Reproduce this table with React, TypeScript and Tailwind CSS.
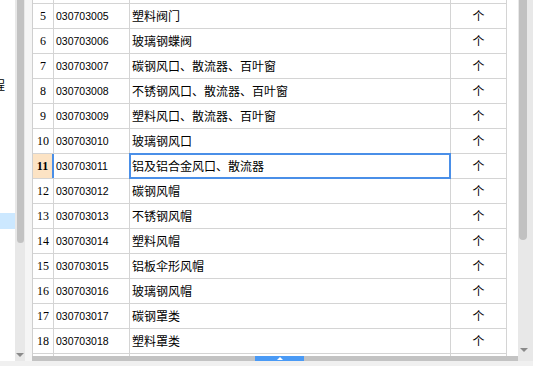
const rows = [
  { no: 4, code: '030703004', name: '铝及铝合金蝶阀', unit: '个' },
  { no: 5, code: '030703005', name: '塑料阀门', unit: '个' },
  { no: 6, code: '030703006', name: '玻璃钢蝶阀', unit: '个' },
  { no: 7, code: '030703007', name: '碳钢风口、散流器、百叶窗', unit: '个' },
  { no: 8, code: '030703008', name: '不锈钢风口、散流器、百叶窗', unit: '个' },
  { no: 9, code: '030703009', name: '塑料风口、散流器、百叶窗', unit: '个' },
  { no: 10, code: '030703010', name: '玻璃钢风口', unit: '个' },
  { no: 11, code: '030703011', name: '铝及铝合金风口、散流器', unit: '个' },
  { no: 12, code: '030703012', name: '碳钢风帽', unit: '个' },
  { no: 13, code: '030703013', name: '不锈钢风帽', unit: '个' },
  { no: 14, code: '030703014', name: '塑料风帽', unit: '个' },
  { no: 15, code: '030703015', name: '铝板伞形风帽', unit: '个' },
  { no: 16, code: '030703016', name: '玻璃钢风帽', unit: '个' },
  { no: 17, code: '030703017', name: '碳钢罩类', unit: '个' },
  { no: 18, code: '030703018', name: '塑料罩类', unit: '个' },
  { no: 19, code: '030703019', name: '不锈钢罩类', unit: '个' },
]

const cjk = "font-['Noto_Sans_CJK_SC',sans-serif]"

function DownArrow() {
  return <div className="w-0 h-0 border-l-[4px] border-r-[4px] border-t-[4px] border-l-transparent border-r-transparent border-t-[#8a8a8a]" />
}

function GridRow({ row }: { row: (typeof rows)[number] }) {
  const active = row.no === 11
  return (
    <div className="flex h-[25px] border-b border-[#d4d4d4]">
      <div
        className={`w-[21px] flex items-center justify-center text-[12px] font-['Liberation_Serif',serif] text-black ${
          active ? 'bg-[#fce3c4] font-bold border-r-2 border-[#4a8fe8]' : 'border-r border-[#d4d4d4]'
        }`}
      >
        {row.no}
      </div>
      <div className="w-[76px] flex items-center pl-[2px] pt-px border-r border-[#d4d4d4] text-[10.5px] font-['Liberation_Sans',sans-serif] text-black">
        {row.code}
      </div>
      <div className={`relative w-[321px] flex items-center pl-[2px] border-r border-[#d4d4d4] text-[12px] text-black ${cjk}`}>
        {row.name}
        {active && <div className="absolute -left-px -top-px right-[-1px] bottom-[-1px] border-2 border-[#4a8fe8]" />}
      </div>
      <div className={`w-[56px] flex items-center justify-center border-r border-[#d4d4d4] text-[12px] text-black ${cjk}`}>
        {row.unit}
      </div>
    </div>
  )
}

export default function App() {
  return (
    <div className="w-[533px] h-[366px] overflow-hidden bg-[#f0f0f0] flex flex-col">
      <div className="flex h-[361px]">
        {/* left tree panel, clipped */}
        <div className="w-[15px] bg-white flex flex-col overflow-hidden">
          <div className={`mt-[78px] -ml-[7px] text-[12px] leading-[14px] text-black whitespace-nowrap ${cjk}`}>程</div>
          <div className="mt-[121px] h-[16px] bg-[#cce8ff]" />
        </div>
        <div className="w-[10px] bg-[#e8e8e8] flex flex-col items-center justify-between pb-[4px]">
          <div className="w-[7px] h-[243px] bg-[#c2c2c2] rounded-b-[4px]" />
          <DownArrow />
        </div>
        <div className="w-[7px] bg-[#f5f5f5]" />

        {/* grid */}
        <div className="w-[486px] flex flex-col">
          <div className="flex-1 overflow-hidden bg-white">
            <div className="-mt-[21px] w-[475px] border-l border-[#cfcfcf]">
              {rows.map((row) => (
                <GridRow key={row.no} row={row} />
              ))}
            </div>
          </div>
          <div className="h-[5px] bg-[#c3c3c3] flex">
            <div className="ml-[223px] w-[49px] bg-[#4a9af5] flex items-start justify-center pt-[1px]">
              <div className="w-0 h-0 border-l-[3px] border-r-[3px] border-b-[3px] border-l-transparent border-r-transparent border-b-white" />
            </div>
          </div>
        </div>

        <div className="w-[15px] bg-[#e8e8e8] flex flex-col justify-between items-start pb-[9px]">
          <div className="ml-[1px] w-[8px] h-[240px] bg-[#c1c1c1] rounded-b-[4px]" />
          <div className="ml-[2px]">
            <DownArrow />
          </div>
        </div>
      </div>
      <div className="h-[5px] bg-[#f0f0f0]" />
    </div>
  )
}
